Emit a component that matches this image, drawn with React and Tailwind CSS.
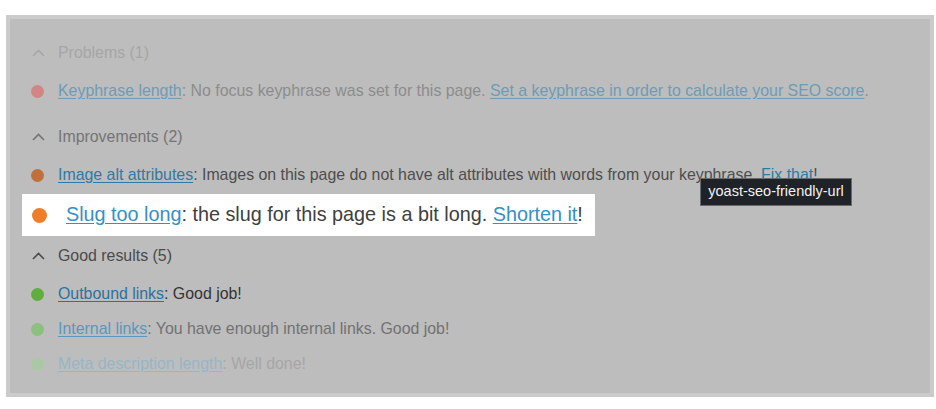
import React from "react";

const Chevron = ({ color }) => (
  <svg width="13" height="8" viewBox="0 0 13 8" className="shrink-0">
    <polyline points="1,7 6.5,1.5 12,7" fill="none" stroke={color} strokeWidth="1.6" />
  </svg>
);

const Header = ({ label, color, className }) => (
  <div className={"flex h-[24px] items-center pl-[22px] " + className}>
    <Chevron color={color} />
    <span className="ml-[13px]" style={{ color }}>
      {label}
    </span>
  </div>
);

const Row = ({ dot, link, linkColor, textColor, children, className }) => (
  <div className={"flex h-[24px] items-center whitespace-nowrap pl-[21px] " + className}>
    <span className="h-[13px] w-[13px] shrink-0 rounded-full" style={{ background: dot }} />
    <span className="ml-[14px]" style={{ color: textColor }}>
      <a className="underline underline-offset-2" style={{ color: linkColor }}>
        {link}
      </a>
      {children}
    </span>
  </div>
);

export default function App() {
  return (
    <div className="h-[409px] w-[936px] bg-white pt-[15px] pl-[6px] font-['Liberation_Sans',Arial,sans-serif] text-[15.9px]">
      <div className="relative h-[382px] w-[928px] overflow-hidden border-4 border-[#cbcbcb] bg-[#bdbdbd]">
        <div className="flex flex-col pt-[22px]">
          <Header label="Problems (1)" color="#a6a6a6" />
          <Row
            className="mt-[14px]"
            dot="#d28585"
            link="Keyphrase length"
            linkColor="#6e9bb6"
            textColor="#8c8c8c"
          >
            : No focus keyphrase was set for this page.{" "}
            <a className="underline underline-offset-2" style={{ color: "#6e9bb6" }}>
              Set a keyphrase in order to calculate your SEO score
            </a>
            .
          </Row>

          <Header className="mt-[22px]" label="Improvements (2)" color="#747474" />
          <Row
            className="mt-[14px]"
            dot="#c0703a"
            link="Image alt attributes"
            linkColor="#2f79a4"
            textColor="#4d4d4d"
          >
            : Images on this page do not have alt attributes with words from your keyphrase.{" "}
            <a className="underline underline-offset-2" style={{ color: "#2f79a4" }}>
              Fix that
            </a>
            !
          </Row>

          <div className="mt-[7px] ml-[12px] flex h-[42px] w-[573px] items-center whitespace-nowrap bg-white pl-[10px] text-[19.8px]">
            <span className="h-[15px] w-[15px] shrink-0 rounded-full bg-[#ee7e2c]" />
            <span className="ml-[19px] text-[#404040]">
              <a className="text-[#3490c6] underline underline-offset-2">Slug too long</a>: the slug for
              this page is a bit long.{" "}
              <a className="text-[#3490c6] underline underline-offset-2">Shorten it</a>!
            </span>
          </div>

          <Header className="mt-[8px]" label="Good results (5)" color="#4a4a4a" />
          <Row
            className="mt-[14px]"
            dot="#5fae3e"
            link="Outbound links"
            linkColor="#2b72a0"
            textColor="#333333"
          >
            : Good job!
          </Row>
          <Row
            className="mt-[11px]"
            dot="#8dbf7e"
            link="Internal links"
            linkColor="#5a97bb"
            textColor="#727272"
          >
            : You have enough internal links. Good job!
          </Row>
          <Row
            className="mt-[11px]"
            dot="#abc8a5"
            link="Meta description length"
            linkColor="#98b5c5"
            textColor="#a6a6a6"
          >
            : Well done!
          </Row>
        </div>

        <div className="absolute top-[159px] left-[690px] flex h-[28px] w-[152px] items-center justify-center border border-[#6a6a6a] bg-[#1f2226] text-[14.5px] text-[#f2f2f2]">
          yoast-seo-friendly-url
        </div>
      </div>
    </div>
  );
}
